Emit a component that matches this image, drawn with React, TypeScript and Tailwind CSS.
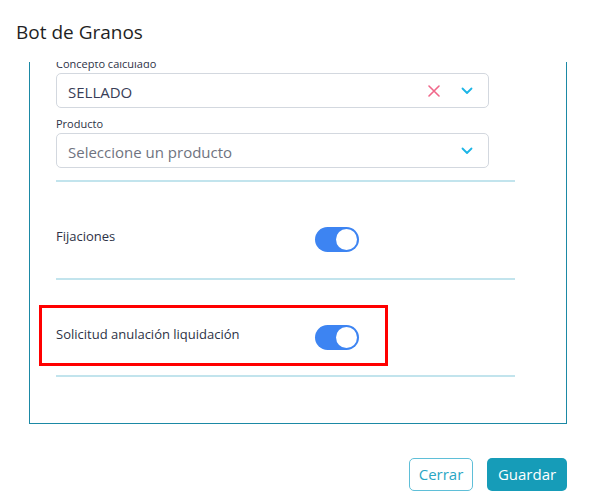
import { useState } from "react";

const font = { fontFamily: '"Open Sans", "Noto Sans", sans-serif' };

const Chevron = () => (
  <svg width="12" height="8" viewBox="0 0 12 8" fill="none" stroke="#1cb5e6" strokeWidth="1.8" strokeLinecap="round" strokeLinejoin="round">
    <path d="M1.5 1.5 L6 6 L10.5 1.5" />
  </svg>
);

const Cross = () => (
  <svg width="12" height="12" viewBox="0 0 12 12" fill="none" stroke="#f0678a" strokeWidth="1.6" strokeLinecap="round">
    <path d="M1 1 L11 11 M11 1 L1 11" />
  </svg>
);

interface SelectProps {
  value?: string;
  placeholder: string;
  clearable?: boolean;
}

const SelectBox = ({ value, placeholder, clearable }: SelectProps) => (
  <div className="w-[433px] h-[35px] border border-[#d3d8df] rounded-[5px] flex items-center pl-[11px] pr-[15px] bg-white">
    <span className={value ? "flex-1 pt-[3px] text-[15px] text-[#383d57]" : "flex-1 pt-[3px] text-[15px] text-[#6f7380]"}>
      {value ?? placeholder}
    </span>
    {clearable && value && (
      <span className="mr-[21px] flex items-center">
        <Cross />
      </span>
    )}
    <Chevron />
  </div>
);

const Toggle = ({ on, onChange }: { on: boolean; onChange: () => void }) => (
  <button
    onClick={onChange}
    className={`w-[44px] h-[25px] rounded-full flex items-center px-[2px] ${on ? "bg-[#3d84f2] justify-end" : "bg-[#cfd4da] justify-start"}`}
  >
    <span className="w-[21px] h-[21px] rounded-full bg-white block" />
  </button>
);

export default function App() {
  const [fijaciones, setFijaciones] = useState(true);
  const [anulacion, setAnulacion] = useState(true);

  return (
    <div className="w-[594px] h-[500px] bg-white" style={font}>
      <h1 className="pl-4 pt-[19px] text-[19px] leading-[26px] font-medium text-[#1f1f24]">Bot de Granos</h1>

      <div className="mt-[17px] ml-[29px] w-[538px] h-[362px] border-x border-b border-[#1b89a5] overflow-hidden">
        <div className="-mt-[5px] pl-[26px]">
          <div className="text-[11px] leading-[14px] text-[#2d3246] mb-[2px]">Concepto calculado</div>
          <SelectBox value="SELLADO" placeholder="Seleccione un concepto" clearable />
          <div className="text-[11px] leading-[14px] text-[#2d3246] mt-[9px] mb-[2px]">Producto</div>
          <SelectBox placeholder="Seleccione un producto" />
          <div className="mt-[12px] w-[459px] h-[2px] bg-[#c2e4ed]" />

          <div className="h-[96px] pt-[45px] flex items-start">
            <div className="w-[259px] text-[13px] leading-[18px] text-[#2d3246]">Fijaciones</div>
            <Toggle on={fijaciones} onChange={() => setFijaciones(!fijaciones)} />
          </div>
          <div className="w-[459px] h-[2px] bg-[#c2e4ed]" />

          <div className="relative h-[95px] pt-[45px] flex items-start">
            <div className="w-[259px] text-[13px] leading-[18px] text-[#2d3246]">Solicitud anulación liquidación</div>
            <Toggle on={anulacion} onChange={() => setAnulacion(!anulacion)} />
            <div className="absolute left-[-17px] top-[25px] w-[349px] h-[61px] border-[3px] border-[#ff0000] pointer-events-none" />
          </div>
          <div className="w-[459px] h-[2px] bg-[#c2e4ed]" />
        </div>
      </div>

      <div className="mt-[34px] pr-[27px] flex justify-end gap-[14px]">
        <button className="h-[33px] w-[64px] rounded-[5px] border border-[#5fbfd8] text-[15px] text-[#2aa6c4] bg-white">
          Cerrar
        </button>
        <button className="h-[33px] w-[80px] rounded-[5px] bg-[#169cb8] text-[15px] text-white">
          Guardar
        </button>
      </div>
    </div>
  );
}
